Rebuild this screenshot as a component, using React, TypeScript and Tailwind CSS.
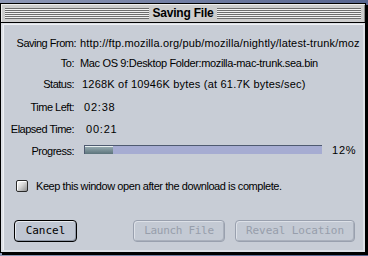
export default function App() {
  const sans = "font-['Liberation_Sans',Arial,sans-serif]";
  const label = "shrink-0 text-right text-[11px] tracking-[-0.5px] text-black";
  const stripes =
    "h-[11px] flex-1 bg-[repeating-linear-gradient(to_bottom,#6e6e6e_0px,#6e6e6e_1px,#f2f2f2_1px,#f2f2f2_2px)]";
  return (
    <div className={`w-[368px] h-[256px] overflow-hidden bg-[linear-gradient(90deg,#8e98b6,#56648f)] pt-[3px] ${sans}`}>
      <div className="w-[366px] h-[250px] border border-black bg-[#dde0e6] shadow-[2px_2px_0_#000] flex flex-col">
        {/* title bar */}
        <div className="h-[18px] shrink-0 flex items-center px-[4px] bg-[#cdcdcd] border-b border-black shadow-[inset_1px_1px_0_#efefef,inset_-1px_0_0_#8a8a8a] box-content">
          <div className={stripes} />
          <div className="px-[3px] text-[12px] font-bold leading-[18px] tracking-[-0.2px] text-black">Saving File</div>
          <div className={stripes} />
        </div>
        {/* frame */}
        <div className="flex-1 pt-[1px] pl-[2px] pr-[2px] pb-[2px] flex">
          <div className="flex-1 flex flex-col bg-[#c8cdd6] border-l border-t border-[#eef0f4] border-r-[#8c93a0] border-b-[#8c93a0] pt-[8px]">
            <div className="flex h-[20px] leading-[20px]">
              <div className={`${label} w-[72px]`}>Saving From:</div>
              <div className="ml-[4px] text-[11px] tracking-[0.15px] whitespace-nowrap overflow-hidden">
                http://ftp.mozilla.org/pub/mozilla/nightly/latest-trunk/moz
              </div>
            </div>
            <div className="flex h-[20px] leading-[20px]">
              <div className={`${label} w-[70px]`}>To:</div>
              <div className="ml-[6px] text-[11px] tracking-[-0.35px] whitespace-nowrap">
                Mac OS 9:Desktop Folder:mozilla-mac-trunk.sea.bin
              </div>
            </div>
            <div className="flex h-[20px] leading-[20px] mt-[1px]">
              <div className={`${label} w-[70px]`}>Status:</div>
              <div className="ml-[8px] text-[11px] tracking-[0.2px] whitespace-nowrap">
                1268K of 10946K bytes (at 61.7K bytes/sec)
              </div>
            </div>
            <div className="flex h-[20px] leading-[20px] mt-[3px]">
              <div className={`${label} w-[70px]`}>Time Left:</div>
              <div className="ml-[10px] text-[11px] tracking-[0.8px]">02:38</div>
            </div>
            <div className="flex h-[20px] leading-[20px] mt-[2px]">
              <div className={`${label} w-[70px]`}>Elapsed Time:</div>
              <div className="ml-[12px] text-[11px] tracking-[0.8px]">00:21</div>
            </div>
            <div className="flex items-center h-[20px] leading-[20px] mt-[2px]">
              <div className={`${label} w-[70px]`}>Progress:</div>
              <div className="ml-[10px] mb-[3px] w-[238px] h-[9px] flex border-t border-l border-[#4e5a70] border-r-[#dfe2f2] border-b-[#dfe2f2] bg-[#a6acd2]">
                <div
                  className="h-full bg-[linear-gradient(to_bottom,#e6eeef_0px,#e6eeef_1px,#93a8ae_1px,#5c737b_100%)]"
                  style={{ width: "12%" }}
                />
              </div>
              <div className="ml-[10px] mb-[2px] text-[11px] tracking-[0.8px]">12%</div>
            </div>
            <div className="flex items-center h-[20px] mt-[15px] pl-[12px]">
              <div className="w-[12px] h-[12px] rounded-[2px] border border-[#2a2a2a] bg-[linear-gradient(135deg,#ffffff,#d8d8d8_45%,#8f8f8f)] shadow-[inset_1px_1px_0_#ffffff]" />
              <div className="ml-[8px] text-[11px] tracking-[-0.43px] whitespace-nowrap leading-[20px]">
                Keep this window open after the download is complete.
              </div>
            </div>
            <div className="flex mt-[24px] pl-[10px]">
              <div className="w-[63px] h-[22px] rounded-[4px] border border-black bg-[#bfc6d2] shadow-[inset_1px_1px_0_#e8ebf0,inset_-1px_-1px_0_#8e96a4] flex items-center justify-center font-['DejaVu_Sans_Mono',monospace] text-[11px] text-black">
                Cancel
              </div>
              <div className="ml-[56px] w-[92px] h-[22px] rounded-[4px] border border-[#99a0ae] bg-[#c4cad4] shadow-[inset_1px_1px_0_#dde1e8,inset_-1px_-1px_0_#aab0bc] flex items-center justify-center font-['DejaVu_Sans_Mono',monospace] text-[11px] tracking-[-0.3px] text-[#979eab]">
                Launch File
              </div>
              <div className="ml-[10px] w-[120px] h-[22px] rounded-[4px] border border-[#99a0ae] bg-[#c4cad4] shadow-[inset_1px_1px_0_#dde1e8,inset_-1px_-1px_0_#aab0bc] flex items-center justify-center font-['DejaVu_Sans_Mono',monospace] text-[11px] tracking-[-0.1px] text-[#979eab]">
                Reveal Location
              </div>
            </div>
          </div>
        </div>
      </div>
    </div>
  );
}
